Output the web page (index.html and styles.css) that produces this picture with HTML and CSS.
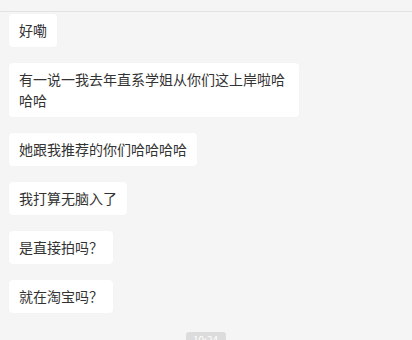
FILE: index.html
```html
<!DOCTYPE html>
<html lang="zh-CN">
<head>
    <meta charset="UTF-8">
    <meta name="viewport" content="width=device-width, initial-scale=1.0">
    <title>聊天</title>
    <link rel="stylesheet" href="styles.css">
</head>
<body>
    <div class="chat">
        <div class="msg">好嘞</div>
        <div class="msg">有一说一我去年直系学姐从你们这上岸啦哈哈哈</div>
        <div class="msg">她跟我推荐的你们哈哈哈哈</div>
        <div class="msg">我打算无脑入了</div>
        <div class="msg">是直接拍吗？</div>
        <div class="msg">就在淘宝吗？</div>
        <div class="time">10:24</div>
    </div>
</body>
</html>
```

FILE: styles.css
```css
* {
    box-sizing: border-box;
    margin: 0;
    padding: 0;
}
body {
    font-family: "Noto Sans CJK SC", "Noto Sans", sans-serif;
    background-color: #f5f5f5;
    padding-top: 11px;
}
.chat {
    border-top: 1px solid #e2e2e2;
    padding: 2px 10px 0 9px;
    display: flex;
    flex-direction: column;
    align-items: flex-start;
    gap: 16px;
}
.msg {
    background-color: #fff;
    color: #333;
    font-size: 14px;
    line-height: 21px;
    padding: 6px 10px 6px 10px;
    border-radius: 4px;
    max-width: 290px;
    box-shadow: 0 0 3px rgba(0, 0, 0, 0.02);
}
.time {
    align-self: center;
    margin-top: 3px;
    width: 40px;
    height: 16px;
    border-radius: 3px;
    background-color: #dcdcdc;
    color: #fff;
    font-size: 10px;
    line-height: 16px;
    text-align: center;
}
```
